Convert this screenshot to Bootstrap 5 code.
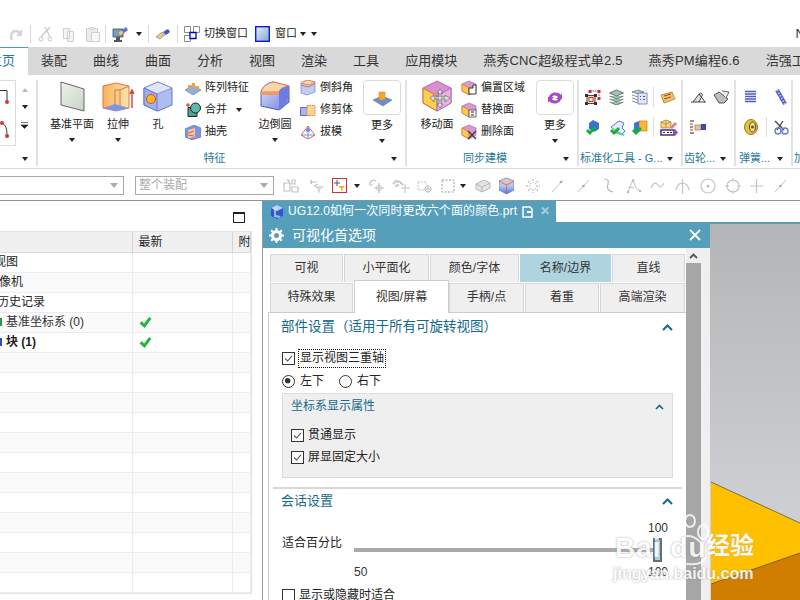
<!DOCTYPE html>
<html lang="zh">
<head>
  <meta charset="UTF-8" />
  <meta name="viewport" content="width=device-width, initial-scale=1" />
  <title>可视化首选项</title>
  <link href="https://cdn.jsdelivr.net/npm/bootstrap@5.3.3/dist/css/bootstrap.min.css" rel="stylesheet" />
  <style>
    html, body { height: 100%; }
    body {
      width: 800px; height: 600px; margin: 0; overflow: hidden; background: #fff; color: #222;
      font-family: "Liberation Sans", "Noto Sans CJK SC", sans-serif; font-size: 12px; line-height: 1.2;
    }
    svg { display: block; flex: none; }
    .svg-defs { position: absolute; width: 0; height: 0; }
    .m2 { margin-left: 2px; } .m3 { margin-left: 3px; } .m4 { margin-left: 4px; } .m5 { margin-left: 5px; }
    .m6 { margin-left: 6px; } .m7 { margin-left: 7px; } .m8 { margin-left: 8px; } .m9 { margin-left: 9px; }
    .m10 { margin-left: 10px; } .m11 { margin-left: 11px; } .m13 { margin-left: 13px; }

    /* quick access */
    .qat-bar { height: 47px; padding-top: 21px; font-size: 11px; }
    .qat-sep { width: 1px; height: 18px; background: #d8d8d8; }
    .caret-dn { width: 0; height: 0; flex: none; border: 3px solid transparent; border-top: 4px solid #222; border-bottom: 0; }
    .qat-n { margin-right: -5px; font-size: 13px; color: #333; }

    /* ribbon tabs */
    .rib-tabs { height: 28px; background: #d9d9d9; font-size: 13px; padding-left: 13px; margin-left: -37px; white-space: nowrap; }
    .rib-tab { padding: 0 13px; line-height: 28px; color: #333; }
    .rib-tab-on { background: #fff; color: #1f7a9c; border-top: 1px solid #4d9ab5; line-height: 26px; }
    .rib-wide { letter-spacing: .17px; }

    /* ribbon groups */
    .rib-body { height: 94px; border-bottom: 1px solid #d9d9d9; font-size: 11px; padding-top: 5px; white-space: nowrap; overflow: hidden; }
    .rib-grp { height: 86px; border-right: 2px solid #e2e2e2; display: flex; flex-direction: column; flex: none; }
    .grp-main { height: 72px; display: flex; }
    .grp-foot { height: 14px; display: flex; align-items: center; color: #1f7a9c; overflow: hidden; }
    .grp-foot span { flex: 1 1 auto; text-align: center; }
    .grp-foot .caret-dn { margin-right: 8px; }
    .g-first { width: 38px; } .g-feat { width: 369px; } .g-sync { width: 172px; }
    .g-std { width: 104px; } .g-gear { width: 53px; } .g-spring { width: 57px; } .g-last { width: 20px; border: 0; }
    .g-std .grp-foot span, .g-gear .grp-foot span, .g-spring .grp-foot span { text-align: left; padding-left: 1px; }
    .g-spring .grp-foot span { padding-left: 3px; }
    .g-last .grp-foot span { text-align: left; padding-left: 1px; }
    .big-btn { display: flex; flex-direction: column; align-items: center; flex: none; }
    .big-btn svg:first-child { height: 32px; }
    .big-lbl { margin-top: 5px; height: 14px; line-height: 14px; }
    .big-btn .caret-dn { margin-top: 7px; }
    .w52 { width: 52px; } .w40 { width: 40px; } .w38 { width: 38px; }
    .more-box { width: 38px; height: 35px; border: 1px solid #dcdcdc; border-radius: 4px; display: flex; align-items: center; justify-content: center; margin-bottom: 3px; }
    .more-lbl { margin-top: 0; }
    .sm-col { display: flex; flex-direction: column; margin-top: -3px; flex: none; }
    .sm-row { height: 22px; display: flex; align-items: center; gap: 4px; }
    .sm-row .caret-dn { margin-left: 5px; }
    .ico-grid { display: grid; grid-template-rows: 30px 30px; row-gap: 0; margin-top: 2px; align-items: center; }
    .ico-std { grid-template-columns: 24px 23px 21px 7px 20px; padding-left: 6px; }
    .ico-gear { grid-template-columns: 23px 20px; padding-left: 7px; }
    .ico-spring { grid-template-columns: 22px 8px 20px; padding-left: 8px; }
    .ico-sep { width: 1px; height: 20px; background: #ddd; }
    .first-frame { width: 17px; height: 66px; margin-left: -1px; border: 1px solid #dcdcdc; border-left: 0; position: relative; }
    .first-spin { margin-left: 5px; display: flex; flex-direction: column; align-items: center; gap: 13px; padding-top: 8px; }

    /* selection bar */
    .sel-bar { height: 31px; padding-top: 7px; font-size: 12px; color: #aaa; }
    .sel-combo { height: 19px; border: 1px solid #a8a8a8; display: flex; align-items: center; justify-content: space-between; padding: 0 5px 0 3px; }
    .caret-gr { width: 0; height: 0; border: 4px solid transparent; border-top: 5px solid #aaa; border-bottom: 0; }
    .c-one { width: 126px; margin-left: -2px; } .c-two { width: 139px; margin-left: 11px; }
    .sel-ico { height: 19px; display: flex; align-items: center; }
    .red-box { width: 15px; height: 15px; border: 1px solid #c8323c; }

    /* main area */
    .work-area { height: 400px; border-top: 1px solid #8f9294; }
    .nav-panel { width: 262px; flex: none; }
    .nav-top { height: 30px; display: flex; justify-content: flex-end; align-items: center; padding-right: 17px; }
    .max-ico { width: 12px; height: 11px; border: 1px solid #222; border-top-width: 2px; margin-top: 2px; }
    .tree-wrap { width: 252px; border: 1px solid #e4e4e4; border-left: 0; }
    .tree-tbl { table-layout: fixed; width: 250px; margin: 0; border-color: #ececec; }
    .tree-tbl th, .tree-tbl td { padding: 0; height: 20px; font-size: 12px; font-weight: 400; vertical-align: middle; border-bottom: 1px solid #ececec; overflow: hidden; white-space: nowrap; }
    .tree-tbl th { background: #f0f0f0; --bs-table-bg: #f0f0f0; border-bottom: 1px solid #dcdcdc; border-right: 1px solid #d4d4d4; }
    .tree-tbl td { border-right: 1px solid #ececec; }
    .tree-tbl tr.alt td { --bs-table-bg: #fafafa; background: #fafafa; }
    .th-pad { padding-left: 6px !important; }
    .tree-txt { display: flex; align-items: center; }
    .t-a { margin-left: -6px; } .t-b { margin-left: -13px; } .t-c { margin-left: -3px; }
    .t-d { color: #333; }
    .t-e { font-weight: 700; color: #222; }
    .tree-tip { width: 2px; height: 8px; margin-right: 4px; flex: none; }
    .tip-g { background: #2a9a3a; }
    .tip-b { background: #2a4ad0; }
    .chk-cell { padding-left: 6px !important; }

    .doc-col { width: 538px; flex: none; }
    .doc-tabrow { height: 21px; }
    .doc-tab { width: 294px; height: 21px; background: #559fba; color: #fff; font-size: 12px; letter-spacing: .1px; display: flex; align-items: center; padding-left: 7px; gap: 3px; white-space: nowrap; }
    .doc-x { color: #a9cfdc; font-weight: 700; margin-left: 3px; }
    .dlg-line { height: 2px; background: #559fba; }
    .dlg-wrap { height: 376px; }
    .dlg { width: 448px; flex: none; border-left: 1px solid #9a9a9a; margin-top: -2px; overflow: hidden; }
    .dlg-head { height: 26px; background: #559fba; color: #fff; font-size: 14px; display: flex; align-items: center; padding: 0 9px 0 6px; gap: 8px; }
    .dlg-x { margin-left: auto; }
    .dlg-main { height: 352px; }
    .dlg-left { width: 425px; padding: 6px 0 0 5px; flex: none; }
    .pref-tabs { flex-wrap: nowrap; border: 0; height: 28px; margin: 0 0 0 2px; }
    .pref-tabs-two { height: 29px; margin: 1px 0 0 2px; position: relative; z-index: 2; }
    .pref-tab { display: block; height: 100%; background: #efefef; border: 1px solid #d6d6d6; border-bottom: 0; margin-right: 1px; text-align: center; color: #333; padding-top: 6px; font-size: 12px; flex: none; }
    .pt-74 { width: 73px; } .pt-86 { width: 85px; } .pt-90 { width: 89px; } .pt-92 { width: 91px; } .pt-73 { width: 73px; }
    .pt-84 { width: 83px; } .pt-95 { width: 95px; margin: -3px 0 -1px; height: 33px; background: #fff; border-color: #ccc; padding-top: 9px; }
    .pt-76 { width: 75px; } .pt-75 { width: 74px; } .pt-85 { width: 85px; margin-right: 0; }
    .pt-hi { background: #aed4e0; border-color: #aed4e0; }
    .pref-box { width: 420px; height: 300px; border: 1px solid #ccc; border-bottom: 0; margin-left: 0; padding: 0 5px; }
    .sec-head { display: flex; align-items: center; justify-content: space-between; color: #15698c; padding: 0 9px 0 7px; }
    .sh-a { height: 29px; font-size: 13.5px; }
    .sh-b { height: 24px; font-size: 13px; }
    .opt-row { display: flex; align-items: center; color: #222; }
    .or-a { height: 19px; margin: 7px 0 0 8px; }
    .or-b { height: 20px; margin: 3px 0 0 8px; }
    .focus-txt { border: 1px dotted #111; padding: 0 1px; margin-left: -1px; height: 19px; line-height: 17px; }
    .pref-chk { width: 13px; height: 13px; margin: 0 4px 0 0 !important; flex: none; border: 1px solid #333; background-color: #fff; }
    .pref-chk[type=checkbox] { border-radius: 0; }
    .pref-chk[type=checkbox]:checked { background-color: #fff; border-color: #333; --bs-form-check-bg-image: url("data:image/svg+xml,%3csvg xmlns='http://www.w3.org/2000/svg' viewBox='0 0 13 13'%3e%3cpath d='M2.500 6.500l3 3 5-6' fill='none' stroke='%23555' stroke-width='1.300'/%3e%3c/svg%3e"); background-size: 100%; }
    .pref-chk:focus { box-shadow: none; border-color: #333; }
    .pref-rad[type=radio] { border-radius: 50%; }
    .pref-rad[type=radio]:checked { background-color: #fff; border-color: #333; --bs-form-check-bg-image: url("data:image/svg+xml,%3csvg xmlns='http://www.w3.org/2000/svg' viewBox='0 0 13 13'%3e%3ccircle cx='5.500' cy='5.500' r='3.200' fill='%23333'/%3e%3c/svg%3e"); background-size: 100%; }
    .rad-one { margin-left: 1px !important; }
    .rad-two { margin-left: 15px !important; margin-right: 5px !important; }
    .sub-box { width: 391px; height: 85px; margin: 2px 0 0 8px; background: #efefef; border: 1px solid #ddd; padding: 0 8px; }
    .sub-head { height: 25px; display: flex; align-items: center; justify-content: space-between; color: #15698c; }
    .sub-row { height: 22px; display: flex; align-items: center; color: #222; }
    .sr-first { margin-top: 5px; }
    .sec-rule { height: 2px; background: #d8d8d8; margin: 9px 0 0 -1px; width: 409px; }
    .sld-wrap { display: flex; margin: 8px 0 0 8px; }
    .sld-lbl { width: 72px; padding-top: 15px; flex: none; }
    .sld-col { flex: none; width: 314px; }
    .sld-top { height: 14px; text-align: right; line-height: 14px; color: #333; }
    .sld-rail { height: 24px; margin-top: 3px; display: flex; align-items: center; }
    .sld-track { width: 299px; height: 4px; background: #aaa; }
    .sld-thumb { width: 9px; height: 24px; background: #aed4e0; border: 2px solid #60707a; }
    .sld-ends { display: flex; justify-content: space-between; color: #333; line-height: 14px; margin-top: 3px; }
    .or-c { height: 16px; margin: 8px 0 0 8px; }
    .scroll-col { width: 15px; margin-left: -2px; background: #efefef; flex: none; }
    .scroll-up { height: 15px; display: flex; align-items: center; justify-content: center; }
    .scroll-thumb { height: 337px; background: #a6a6a6; }
    .scroll-gap { width: 10px; background: #efefef; flex: none; }
    .gfx { flex: 1 1 auto; overflow: hidden; }

    /* watermark */
    .bd-mark { position: absolute; left: 612px; top: 512px; width: 150px; height: 84px; color: #fff; pointer-events: none; }
    .bd-paw { position: absolute; left: 55px; top: 2px; }
    .bd-word { position: absolute; left: 3px; top: 19px; font-size: 28px; font-weight: 700; opacity: .85; font-family: "Liberation Sans", sans-serif; letter-spacing: 1px; white-space: nowrap; text-shadow: 0 0 2px #888; }
    .bd-cn { position: absolute; left: 94px; top: 20px; font-size: 24px; font-weight: 700; opacity: .9; white-space: nowrap; text-shadow: 0 0 1px #999; }
    .bd-url { position: absolute; left: 1px; top: 52px; font-size: 16px; font-weight: 700; opacity: .85; font-family: "Liberation Sans", sans-serif; white-space: nowrap; text-shadow: 0 0 2px #888; }
  </style>
</head>
<body>

<svg class="svg-defs" xmlns="http://www.w3.org/2000/svg">
  <defs>
    <linearGradient id="gOr" x1="0" x2="1"><stop offset="0" stop-color="#f6b25a"/><stop offset="1" stop-color="#f8e6a8"/></linearGradient>
    <linearGradient id="gBl" x1="0" x2="1" y1="0" y2="1"><stop offset="0" stop-color="#dfe6fb"/><stop offset="1" stop-color="#6f82e0"/></linearGradient>
    <linearGradient id="gGn" x1="0" x2="1" y1="0" y2="1"><stop offset="0" stop-color="#eef2ea"/><stop offset="1" stop-color="#c6d4c6"/></linearGradient>
    <linearGradient id="gWin" x1="0" x2="1" y1="0" y2="1"><stop offset="0" stop-color="#e8f0fa"/><stop offset="1" stop-color="#7fa4cc"/></linearGradient>
    <linearGradient id="gCube" x1="0" x2="0" y1="0" y2="1"><stop offset="0" stop-color="#f3c89a"/><stop offset=".5" stop-color="#b4c8ee"/><stop offset="1" stop-color="#4a78e8"/></linearGradient>
    <linearGradient id="gGfx" x1="0" x2="0" y1="0" y2="1"><stop offset="0" stop-color="#b4b5b7"/><stop offset="1" stop-color="#d6d7da"/></linearGradient>
  </defs>
  <symbol id="i-cube-more" viewBox="0 0 32 32"><path d="M16 1l14 7v15l-14 8-14-8V8z" fill="#d98fd0" stroke="#b06ab0"/><path d="M2 8l14 8v15L2 23z" fill="#fdcf4e" stroke="#d07a30"/><path d="M16 16l14-8v15l-14 8z" fill="#e9b4e4" stroke="#b06ab0"/></symbol>
  <symbol id="i-cube-sm" viewBox="0 0 16 16"><path d="M8 1l7 3v7l-7 4-7-4V4z" fill="#d99ad0" stroke="#a868a8" stroke-width=".7"/><path d="M1 4l7 4v7l-7-4z" fill="#fdc94e" stroke="#d07a30" stroke-width=".7"/></symbol>
  <symbol id="i-green" viewBox="0 0 14 14"><path d="M1 8l2-2 2.500 2.500L11 1.500l2 1.500-7 9.500z" fill="#10c030" stroke="#0a8a20" stroke-width=".5"/></symbol>
</svg>

<!-- quick access -->
<div class="qat-bar d-flex align-items-center">
  <svg class="m10" width="13" height="13" viewBox="0 0 13 13"><path d="M2 12C0 7 2 3 6 3c2 0 3 1 4 2" fill="none" stroke="#d4d4d4" stroke-width="2.400"/><path d="M12 1v7H6z" fill="#d4d4d4"/></svg>
  <div class="qat-sep m7"></div>
  <svg class="m7" width="14" height="16" viewBox="0 0 14 16"><path d="M12 1L3 11M7 1l5 10" stroke="#c8c8c8" stroke-width="1.200" fill="none"/><circle cx="3" cy="13" r="2" fill="none" stroke="#c8c8c8"/><circle cx="12" cy="13" r="2" fill="none" stroke="#c8c8c8"/></svg>
  <svg class="m10" width="13" height="15" viewBox="0 0 13 15"><path d="M1.500 1.500h6v10h-6z M5.500 4.500h6v10h-6z" fill="#f4f4f4" stroke="#cfcfcf"/></svg>
  <svg class="m10" width="15" height="16" viewBox="0 0 15 16"><path d="M1.500 2.500h11v13h-11z" fill="#ececec" stroke="#cfcfcf"/><path d="M4.500 1h5v3h-5z" fill="#ddd"/><path d="M6.500 6.500h8v9h-8z" fill="#f6f6f6" stroke="#cfcfcf"/></svg>
  <div class="qat-sep m5"></div>
  <svg class="m6" width="17" height="17" viewBox="0 0 17 17"><path d="M1 3h10v8H1z" fill="#6fa2c4" stroke="#333" stroke-width=".7"/><path d="M4 11h4v3H4zM2 14h8v2H2z" fill="#555"/><path d="M9 5l5-4 2 3-5 4z" fill="#5a6ed8"/><path d="M6 6l4-2 2 3-4 3z" fill="#e9c48f" stroke="#8a6a40" stroke-width=".5"/></svg>
  <div class="caret-dn m7"></div>
  <div class="qat-sep m6"></div>
  <svg class="m6" width="16" height="12" viewBox="0 0 16 12"><path d="M1 9l6-5 3 3-5 4z" fill="#e9c48f" stroke="#777" stroke-width=".6"/><path d="M8 4l5-3 2 3-4 3z" fill="#3f50c8"/></svg>
  <div class="qat-sep m6"></div>
  <svg class="m6" width="16" height="16" viewBox="0 0 16 16"><path d="M.5.500h6v6h-6zM9.500.500h6v6h-6zM.5 9.500h6v6h-6z" fill="#fff" stroke="#8a8a8a"/><path d="M6 6.500h6v6H6z" fill="#fff" stroke="#00c" stroke-width="1.300"/></svg>
  <span class="m4">切换窗口</span>
  <svg class="m7" width="15" height="16" viewBox="0 0 15 16"><rect x=".7" y=".7" width="13.600" height="14.600" fill="url(#gWin)" stroke="#0a1ed8" stroke-width="1.400"/></svg>
  <span class="m5">窗口</span>
  <div class="caret-dn m3"></div>
  <div class="caret-dn m5"></div>
  <span class="qat-n ms-auto">N</span>
</div>

<!-- ribbon tabs -->
<div class="rib-tabs d-flex">
  <div class="rib-tab rib-tab-on">主页</div>
  <div class="rib-tab">装配</div>
  <div class="rib-tab">曲线</div>
  <div class="rib-tab">曲面</div>
  <div class="rib-tab">分析</div>
  <div class="rib-tab">视图</div>
  <div class="rib-tab">渲染</div>
  <div class="rib-tab">工具</div>
  <div class="rib-tab">应用模块</div>
  <div class="rib-tab rib-wide">燕秀CNC超级程式单2.5</div>
  <div class="rib-tab rib-wide">燕秀PM编程6.6</div>
  <div class="rib-tab">浩强工具</div>
</div>

<!-- ribbon -->
<div class="rib-body d-flex">
  <div class="rib-grp g-first">
    <div class="grp-main">
      <div class="first-frame">
        <svg width="16" height="60" viewBox="0 0 16 60"><path d="M0 9.500h8v11" fill="none" stroke="#333"/><circle cx="8" cy="21" r="2" fill="#c83a3a"/><path d="M3 42c4 2 5 6 5 13" fill="none" stroke="#333"/><circle cx="3" cy="42" r="2" fill="#c83a3a"/><circle cx="8" cy="55" r="2" fill="#c83a3a"/></svg>
      </div>
      <div class="first-spin">
        <svg width="6" height="4" viewBox="0 0 6 4"><path d="M0 4l3-4 3 4z" fill="#bbb"/></svg>
        <div class="caret-dn"></div>
        <svg width="7" height="7" viewBox="0 0 7 7"><path d="M0 .5h7M0 3h7l-3.500 3.500z" fill="#222" stroke="#222" stroke-width=".6"/></svg>
      </div>
    </div>
    <div class="grp-foot"><span></span><div class="caret-dn"></div></div>
  </div>

  <div class="rib-grp g-feat">
    <div class="grp-main">
      <div class="big-btn w52 m8">
        <svg width="28" height="32" viewBox="0 0 28 32"><path d="M3 2l23 7v22L3 25z" fill="url(#gGn)" stroke="#666" stroke-width="1"/></svg>
        <div class="big-lbl">基准平面</div><div class="caret-dn"></div>
      </div>
      <div class="big-btn w40">
        <svg width="33" height="32" viewBox="0 0 33 32"><path d="M1 6l13-3 13 3v22l-13 3-13-3z" fill="url(#gOr)" stroke="#e0704a"/><path d="M13 10h5l9-4M13 10v20M18 10v20" fill="none" stroke="#e0704a"/><path d="M1 28l12-4 14 4-13 3z" fill="#7d96e4"/><path d="M30 28V12M28 14l2-4 2 4" stroke="#d63030" fill="none" stroke-width="1.300"/></svg>
        <div class="big-lbl">拉伸</div><div class="caret-dn"></div>
      </div>
      <div class="big-btn w40">
        <svg width="30" height="32" viewBox="0 0 30 32"><path d="M15 2l14 6v17l-14 6-14-6V8z" fill="#aebcf0" stroke="#6878c8"/><path d="M1 8l13 6 15-6-14-6z" fill="#dfe6fb" stroke="#8898d8"/><path d="M14 14v17L1 25V8z" fill="#a0aeee" stroke="#6878c8"/><circle cx="8" cy="19" r="4.500" fill="#f8b820" stroke="#e04830"/></svg>
        <div class="big-lbl">孔</div>
      </div>
      <div class="sm-col m7">
        <div class="sm-row"><svg width="16" height="14" viewBox="0 0 16 14"><path d="M0 9l8-5 8 5-8 5z" fill="#8eb0e0" stroke="#5a78b8" stroke-width=".6"/><path d="M3 4h3v4H3zM7 2h3v4H7zM11 5h3v4h-3z" fill="#f0a040"/></svg><span>阵列特征</span></div>
        <div class="sm-row"><svg width="16" height="16" viewBox="0 0 16 16"><path d="M3 5.500h9v9H3z" fill="#4aa89a" stroke="#222"/><circle cx="10.500" cy="6" r="5" fill="#5cb8a8" stroke="#222"/><path d="M1 3h4M3 1v4" stroke="#d02020"/></svg><span>合并</span><div class="caret-dn"></div></div>
        <div class="sm-row"><svg width="16" height="15" viewBox="0 0 16 15"><path d="M0 4l9-4 7 3v9l-9 3-7-3z" fill="#7f96d8" stroke="#5a70b8" stroke-width=".6"/><path d="M3 5l7-2v9l-7 1z" fill="#f6c6a0"/><path d="M3 8l6-2M3 10l6 1" stroke="#e06030"/></svg><span>抽壳</span></div>
      </div>
      <div class="big-btn w38 m7">
        <svg width="30" height="32" viewBox="0 0 30 32"><path d="M1 12c1-5 6-9 12-10l16 4v16l-10 8L1 26z" fill="url(#gBl)" stroke="#4a5ab8"/><path d="M1 12C3 6 8 3 14 2l15 4c-6 1-9 3-10 6z" fill="#f6d8a8" stroke="#e08060"/><path d="M19 12v18c6-2 10-8 10-24-6 1-9 3-10 6z" fill="#6c7ce0"/><path d="M1 12h18v3H1z" fill="#f39a60"/></svg>
        <div class="big-lbl">边倒圆</div><div class="caret-dn"></div>
      </div>
      <div class="sm-col m6">
        <div class="sm-row"><svg width="16" height="16" viewBox="0 0 16 16"><path d="M1 3l6-3 8 2v10L7 15 1 13z" fill="#bfcdf3" stroke="#7282d4" stroke-width=".7"/><path d="M1 3l6-3 8 2-6 3z" fill="#f7d8a0" stroke="#e07050" stroke-width=".7"/><path d="M1 5l7 2 7-3" fill="none" stroke="#e07050"/></svg><span>倒斜角</span></div>
        <div class="sm-row"><svg width="16" height="12" viewBox="0 0 16 12"><path d="M.5 3.500h8v8h-8z" fill="#aab6ee" stroke="#5a68c8"/><path d="M7 1.500h8v10H7z" fill="#f8d68a" stroke="#e07050" stroke-dasharray="1.500 1"/></svg><span>修剪体</span></div>
        <div class="sm-row"><svg width="16" height="15" viewBox="0 0 16 15"><path d="M8 1L1 10l7 4 7-4z" fill="#f3f5fc" stroke="#e07050"/><path d="M8 1v13M1 10h14" stroke="#5a78c8" stroke-width=".7"/><circle cx="8" cy="5" r="2" fill="#6f8ad8"/></svg><span>拔模</span></div>
      </div>
      <div class="big-btn w38 m10">
        <div class="more-box"><svg width="19" height="18" viewBox="0 0 19 18"><path d="M0 11l9-4 10 4-9 6z" fill="#6792c8" stroke="#4a70a8" stroke-width=".5"/><path d="M6 3h6v8H6z" fill="#f6a72c" stroke="#d47820" stroke-width=".5"/></svg></div>
        <div class="big-lbl more-lbl">更多</div><div class="caret-dn"></div>
      </div>
    </div>
    <div class="grp-foot"><span>特征</span><div class="caret-dn"></div></div>
  </div>

  <div class="rib-grp g-sync">
    <div class="grp-main">
      <div class="big-btn w38 m11">
        <svg width="32" height="32" viewBox="0 0 32 32"><use href="#i-cube-more"/><path d="M19 9l3 4h-2v4h4v-2l5 3-5 4v-3h-4v5h2l-3 4-3-4h2v-5h-5v3l-4-4 4-3v2h5v-4h-2z" fill="#ddd" stroke="#666" stroke-width=".7"/></svg>
        <div class="big-lbl">移动面</div>
      </div>
      <div class="sm-col m5">
        <div class="sm-row"><svg width="16" height="16" viewBox="0 0 16 16"><use href="#i-cube-sm"/><path d="M8 8h4V5h3v9H8z" fill="#fff" stroke="#222" stroke-width=".9"/></svg><span>偏置区域</span></div>
        <div class="sm-row"><svg width="16" height="16" viewBox="0 0 16 16"><use href="#i-cube-sm"/><path d="M8 8h7v7H8z" fill="#fff" stroke="#444" stroke-width=".8"/><path d="M10 10h3M10 13h3" stroke="#222"/></svg><span>替换面</span></div>
        <div class="sm-row"><svg width="16" height="16" viewBox="0 0 16 16"><use href="#i-cube-sm"/><path d="M7 7l8 8M15 7l-8 8" stroke="#444" stroke-width="1.500"/></svg><span>删除面</span></div>
      </div>
      <div class="big-btn w38 m11">
        <div class="more-box"><svg width="16" height="14" viewBox="0 0 16 14"><path d="M2 6c1-5 9-6 12-2l1-2v6H9l2-2C9 4 6 4 5 6zM14 8c-1 5-9 6-12 2l-1 2V6h6L5 8c2 2 5 2 6 0z" fill="#a848c8"/></svg></div>
        <div class="big-lbl more-lbl">更多</div><div class="caret-dn"></div>
      </div>
    </div>
    <div class="grp-foot"><span>同步建模</span><div class="caret-dn"></div></div>
  </div>

  <div class="rib-grp g-std">
    <div class="grp-main">
      <div class="ico-grid ico-std">
        <svg width="16" height="16" viewBox="0 0 16 16"><path d="M5 2h9v8" fill="none" stroke="#c83040" stroke-dasharray="1.500 1"/><path d="M3.500 1h3v3h-3zM12.500 1h3v3h-3zM12.500 8h3v3h-3z" fill="#c83040"/><path d="M2 6.500h8v8H2z" fill="#fbe6c4" stroke="#444"/><path d="M0 5h3v3H0zM9 5h3v3H9zM0 13h3v3H0zM9 13h3v3H9z" fill="#333"/><rect x="4" y="8.500" width="4" height="4" fill="#fff" stroke="#e02020"/></svg>
        <svg width="15" height="16" viewBox="0 0 15 16"><path d="M7.500 1l7 3-7 3-7-3zM.5 7l7 3 7-3M.5 10l7 3 7-3M.5 13l7 3 7-3" fill="#9ac8b0" stroke="#555" stroke-width=".8"/></svg>
        <svg width="16" height="16" viewBox="0 0 16 16"><path d="M6 1l6 2-6 2-6-2zM0 6l6 2M0 9l6 2M0 12l6 2" fill="#b0d0c0" stroke="#777" stroke-width=".8"/><path d="M6 4h9v11H6z" fill="#e4e8fb" stroke="#5a70d0" stroke-width=".8"/><path d="M8 7h1v1H8zM11 7h2v1h-2zM8 10h1v1H8zM11 10h2v1h-2z" fill="#3a50c0"/></svg>
        <div class="ico-sep"></div>
        <svg width="16" height="13" viewBox="0 0 16 13"><path d="M1 4l11-3 3 7-11 4z" fill="#f8c068" stroke="#b07a28" stroke-width=".8"/><path d="M4 5l7-2M4 8l7-2" stroke="#7a5a28"/></svg>
        <svg width="15" height="17" viewBox="0 0 15 17"><path d="M8 1l6 3v6l-5 3-5-3V4z" fill="#3c72d8"/><path d="M1 12l2-2 2 2 4-5 2 2-6 7z" fill="#10b030"/></svg>
        <svg width="17" height="17" viewBox="0 0 17 17"><path d="M2 8l8-6 5 2-2 5 3 3-3 3-6-3z" fill="#e4eefc" stroke="#5a78d8"/><path d="M5 13l10 3" stroke="#70c8a0" stroke-width="2"/><path d="M1 12l2-2 2 2 4-4 2 2-6 6z" fill="#10b030"/></svg>
        <svg width="16" height="17" viewBox="0 0 16 17"><path d="M7 2h8v10H7z" fill="#f8b830" stroke="#c87820" stroke-width=".7"/><path d="M2 4l5-2v10H2z" fill="#3c72d8"/><path d="M0 12l2-2 2 2 4-4 2 2-6 6z" fill="#10b030"/></svg>
        <div class="ico-sep"></div>
        <svg width="18" height="17" viewBox="0 0 18 17"><path d="M1 3l5-2 5 2v6H1z" fill="#f8d080" stroke="#a87828" stroke-width=".7"/><path d="M6 1v8M1 3l5 2 5-2" stroke="#a87828" fill="none" stroke-width=".6"/><path d="M10 8l5-5 2 2-5 5z" fill="#e08080"/><path d="M1 11h13v5H1z" fill="#fff" stroke="#4a2a90" stroke-width="1.500"/><path d="M3 13h2v1H3zM7 13h2v1H7zM10 13h2v1h-2z" fill="#333"/><path d="M15 10l3 3.500-3 3.500z" fill="#b040b0"/></svg>
      </div>
    </div>
    <div class="grp-foot"><span>标准化工具 - G...</span><div class="caret-dn"></div></div>
  </div>

  <div class="rib-grp g-gear">
    <div class="grp-main">
      <div class="ico-grid ico-gear">
        <svg width="17" height="12" viewBox="0 0 17 12"><path d="M1 11h15M3 11l6-8c2-2 4 0 3 2l-3 6M9 3l6 8" fill="#ddd" stroke="#444" stroke-width="1"/></svg>
        <svg width="17" height="14" viewBox="0 0 17 14"><path d="M1 5l5-3 9 7-4 4H6z" fill="#bdbdbd" stroke="#333" stroke-width=".8"/><path d="M9 1l7 1-3 6" fill="#eee" stroke="#444" stroke-width=".8"/></svg>
        <svg width="16" height="14" viewBox="0 0 16 14"><path d="M0 1h4M0 7h3M0 13h4" stroke="#222"/><path d="M0 4h3M0 10h3" stroke="#c83030"/><path d="M5 5h6v5H5z" fill="#e9c48f" stroke="#8a6a40" stroke-width=".6"/><rect x="11" y="4" width="5" height="6" fill="#3a4ab0"/></svg>
      </div>
    </div>
    <div class="grp-foot"><span>齿轮...</span><div class="caret-dn"></div></div>
  </div>

  <div class="rib-grp g-spring">
    <div class="grp-main">
      <div class="ico-grid ico-spring">
        <svg width="13" height="14" viewBox="0 0 13 14"><path d="M1 1.500h11M1 4h11M1 6.500h11M1 9h11M1 11.500h11" stroke="#4a5ac8" stroke-width="1.700"/></svg>
        <span></span>
        <svg width="14" height="17" viewBox="0 0 14 17"><path d="M3 1l8 14" stroke="#4a5ac8" stroke-width="4"/><path d="M3 1l8 14" stroke="#b8c4f0" stroke-width="2" stroke-dasharray="1.500 1.500"/></svg>
        <svg width="14" height="16" viewBox="0 0 14 16"><ellipse cx="7" cy="8" rx="6.500" ry="7.500" fill="#e8c040" stroke="#9a7a10"/><ellipse cx="8.500" cy="8" rx="3" ry="5" fill="#f6e080" stroke="#444"/><circle cx="8.500" cy="8" r="1.500" fill="#555"/></svg>
        <div class="ico-sep"></div>
        <svg width="15" height="15" viewBox="0 0 15 15"><path d="M1 1l9 9M9 1L3 10" stroke="#444" stroke-width="1.300"/><circle cx="4" cy="11" r="3" fill="none" stroke="#6a7ad8" stroke-width="1.400"/><circle cx="11" cy="11" r="3" fill="none" stroke="#6a7ad8" stroke-width="1.400"/></svg>
      </div>
    </div>
    <div class="grp-foot"><span>弹簧...</span><div class="caret-dn"></div></div>
  </div>
  <div class="rib-grp g-last"><div class="grp-main"></div><div class="grp-foot"><span>加工</span></div></div>
</div>

<!-- selection bar -->
<div class="sel-bar d-flex align-items-start">
  <div class="sel-combo c-one"><span></span><span class="caret-gr"></span></div>
  <div class="sel-combo c-two"><span>整个装配</span><span class="caret-gr"></span></div>
  <div class="sel-ico m9"><svg width="16" height="16" viewBox="0 0 16 16"><path d="M1 5h6v8H1zM9 2h3v4H9zM9 9h6v5H9zM3 2h3v3" fill="none" stroke="#c4c4c4" stroke-width="1.200"/></svg></div>
  <div class="sel-ico m11"><svg width="14" height="15" viewBox="0 0 14 15"><path d="M1 4h6M2 2L0 4l2 2M4 8l4-2" fill="none" stroke="#c4c4c4" stroke-width="1.200"/><path d="M4 8h10l-4 4v3l-2-1v-2z" fill="#d8d8d8"/></svg></div>
  <div class="sel-ico m8"><div class="red-box d-flex align-items-center justify-content-center"><svg width="11" height="11" viewBox="0 0 11 11"><path d="M3 0v6M0 3h6" stroke="#555"/><path d="M4 6h7L8.500 8.500V11L7 10V8.500z" fill="#f0b020"/></svg></div></div>
  <div class="sel-ico m7"><div class="caret-dn"></div></div>
  <div class="sel-ico m9"><svg width="16" height="16" viewBox="0 0 16 16"><path d="M1 6c0-3 3-5 6-3M1 4v3h3" fill="none" stroke="#c4c4c4" stroke-width="1.200"/><path d="M10 5v10M5 10h10" stroke="#c4c4c4" stroke-width="1.200"/><circle cx="10" cy="10" r="2.500" fill="none" stroke="#c4c4c4"/></svg></div>
  <div class="sel-ico m7"><svg width="20" height="16" viewBox="0 0 20 16"><path d="M1 6l3-3 4 1 3 3M3 8l4-1" fill="none" stroke="#c8c8c8" stroke-width="2"/><path d="M13 6v9M9 10h9" stroke="#c4c4c4"/></svg></div>
  <div class="sel-ico m5"><svg width="15" height="16" viewBox="0 0 15 16"><path d="M1 4h8v8H1z" fill="none" stroke="#c8c8c8" stroke-dasharray="2 1"/><circle cx="11" cy="11" r="3" fill="none" stroke="#c4c4c4"/><path d="M11 7v8M7 11h8" stroke="#c4c4c4"/></svg></div>
  <div class="sel-ico m9"><svg width="14" height="14" viewBox="0 0 14 14"><path d="M1 1h12v12H1z" fill="none" stroke="#999" stroke-dasharray="2 1.500"/></svg></div>
  <div class="sel-ico m5"><div class="caret-dn"></div></div>
  <div class="sel-ico m9"><svg width="16" height="14" viewBox="0 0 16 14"><path d="M1 5l8-4 6 3v5l-8 4-6-3z" fill="#e4e4e4" stroke="#b8b8b8"/><path d="M1 5l6 3 8-4M7 8v5" fill="none" stroke="#b8b8b8"/></svg></div>
  <div class="sel-ico m8"><svg width="15" height="17" viewBox="0 0 15 17"><path d="M7.500 1L15 4v9l-7.500 4L0 13V4z" fill="url(#gCube)" stroke="#5a78d8" stroke-width=".7"/><path d="M0 4l7.500 4L15 4M7.500 8v9" fill="none" stroke="#e05050" stroke-width=".7"/></svg></div>
  <div class="sel-ico m11"><svg width="16" height="16" viewBox="0 0 16 16"><path d="M8 1v4M8 11v4M1 8h4M11 8h4M3 3l3 3M13 3l-3 3M3 13l3-3M13 13l-3-3" stroke="#c4c4c4" stroke-width="1.400" stroke-dasharray="2 1"/></svg></div>
  <div class="sel-ico m10"><svg width="13" height="14" viewBox="0 0 13 14"><path d="M1 13L12 1" stroke="#c4c4c4"/><circle cx="10" cy="3" r="1.300" fill="#aaa"/></svg></div>
  <div class="sel-ico m13"><svg width="13" height="14" viewBox="0 0 13 14"><path d="M1 13L12 1" stroke="#c4c4c4"/><circle cx="6.500" cy="7" r="1.300" fill="#aaa"/></svg></div>
  <div class="sel-ico m11"><svg width="15" height="16" viewBox="0 0 15 16"><path d="M3 1c4 0 5 2 4 5-1 3-1 7 5 8" fill="none" stroke="#b8b8b8" stroke-width="1.200"/></svg></div>
  <div class="sel-ico m10"><svg width="16" height="16" viewBox="0 0 16 16"><path d="M2 14L7 2l3 8 4 3M2 9l6 1" fill="none" stroke="#c4c4c4"/><circle cx="7" cy="2.500" r="1.300" fill="#bbb"/><circle cx="2" cy="14" r="1.300" fill="#bbb"/><circle cx="14" cy="13" r="1.300" fill="#bbb"/></svg></div>
  <div class="sel-ico m8"><svg width="15" height="12" viewBox="0 0 15 12"><path d="M1 8c3-6 5-6 7-3s3 3 6-2" fill="none" stroke="#c4c4c4" stroke-width="1.200"/></svg></div>
  <div class="sel-ico m10"><svg width="15" height="16" viewBox="0 0 15 16"><path d="M1 12c1-5 3-7 6.500-7S13 7 14 12M7.500 1v15" fill="none" stroke="#c4c4c4" stroke-width="1.200"/></svg></div>
  <div class="sel-ico m10"><svg width="16" height="16" viewBox="0 0 16 16"><circle cx="8" cy="8" r="7" fill="none" stroke="#c4c4c4" stroke-width="1.200"/><circle cx="8" cy="8" r="1.500" fill="#bbb"/></svg></div>
  <div class="sel-ico m9"><svg width="16" height="16" viewBox="0 0 16 16"><circle cx="8" cy="8" r="6" fill="none" stroke="#c4c4c4" stroke-width="1.200"/><path d="M8 0v4M8 12v4M0 8h4M12 8h4" stroke="#c4c4c4"/></svg></div>
  <div class="sel-ico m9"><svg width="13" height="14" viewBox="0 0 13 14"><path d="M6.500 0v14M0 7h13" stroke="#c4c4c4" stroke-width="1.200"/></svg></div>
  <div class="sel-ico m11"><svg width="13" height="14" viewBox="0 0 13 14"><path d="M1 13L12 1" stroke="#c4c4c4"/><circle cx="6.500" cy="7" r="1.300" fill="#aaa"/></svg></div>
</div>

<!-- main area -->
<div class="work-area d-flex">
  <div class="nav-panel">
    <div class="nav-top"><div class="max-ico"></div></div>
    <div class="tree-wrap">
      <table class="table tree-tbl">
        <colgroup><col width="132"><col width="100"><col width="18"></colgroup>
        <thead><tr><th></th><th class="th-pad">最新</th><th class="th-pad">附</th></tr></thead>
        <tbody>
          <tr><td><div class="tree-txt t-a">视图</div></td><td></td><td></td></tr>
          <tr class="alt"><td><div class="tree-txt t-b">摄像机</div></td><td></td><td></td></tr>
          <tr><td><div class="tree-txt t-c">历史记录</div></td><td></td><td></td></tr>
          <tr class="alt"><td><div class="tree-txt t-d"><div class="tree-tip tip-g"></div>基准坐标系 (0)</div></td><td class="chk-cell"><svg width="13" height="13"><use href="#i-green"/></svg></td><td></td></tr>
          <tr><td><div class="tree-txt t-e"><div class="tree-tip tip-b"></div>块 (1)</div></td><td class="chk-cell"><svg width="13" height="13"><use href="#i-green"/></svg></td><td></td></tr>
          <tr class="alt"><td></td><td></td><td></td></tr>
          <tr><td></td><td></td><td></td></tr>
          <tr class="alt"><td></td><td></td><td></td></tr>
          <tr><td></td><td></td><td></td></tr>
          <tr class="alt"><td></td><td></td><td></td></tr>
          <tr><td></td><td></td><td></td></tr>
          <tr class="alt"><td></td><td></td><td></td></tr>
          <tr><td></td><td></td><td></td></tr>
          <tr class="alt"><td></td><td></td><td></td></tr>
          <tr><td></td><td></td><td></td></tr>
          <tr class="alt"><td></td><td></td><td></td></tr>
          <tr><td></td><td></td><td></td></tr>
        </tbody>
      </table>
    </div>
  </div>

  <div class="doc-col">
    <div class="doc-tabrow d-flex">
      <div class="doc-tab">
        <svg width="16" height="16" viewBox="0 0 16 16"><path d="M8 1l6 3v8l-6 3-6-3V4z" fill="#2a5ad8"/><path d="M8 1l6 3-6 3-6-3z" fill="#bcd0f8"/><path d="M5 5l2-2v8l5 1-2 2-5-1z" fill="#fff" opacity=".55"/></svg>
        <span>UG12.0如何一次同时更改六个面的颜色.prt</span>
        <svg class="m2" width="12" height="12" viewBox="0 0 12 12"><path d="M1 1h7l2 2v8H1z" fill="none" stroke="#fff" stroke-width="1.500"/><path d="M5 6h4" stroke="#fff" stroke-width="2"/></svg>
        <span class="doc-x">✕</span>
      </div>
    </div>
    <div class="dlg-line"></div>
    <div class="dlg-wrap d-flex">
      <div class="dlg">
        <div class="dlg-head">
          <svg width="15" height="15" viewBox="0 0 15 15"><circle cx="7.500" cy="7.500" r="4" fill="none" stroke="#fff" stroke-width="3"/><path d="M7.500 0v3M7.500 12v3M0 7.500h3M12 7.500h3M2.200 2.200l2 2M10.800 10.800l2 2M2.200 12.800l2-2M10.800 4.200l2-2" stroke="#fff" stroke-width="2"/></svg>
          <span>可视化首选项</span>
          <svg class="dlg-x" width="12" height="12" viewBox="0 0 12 12"><path d="M1 1l10 10M11 1L1 11" stroke="#fff" stroke-width="1.800"/></svg>
        </div>
        <div class="dlg-main d-flex">
          <div class="dlg-left">
            <ul class="nav nav-tabs pref-tabs">
              <li class="pref-tab pt-74">可视</li>
              <li class="pref-tab pt-86">小平面化</li>
              <li class="pref-tab pt-90">颜色/字体</li>
              <li class="pref-tab pt-92 pt-hi">名称/边界</li>
              <li class="pref-tab pt-73">直线</li>
            </ul>
            <ul class="nav nav-tabs pref-tabs pref-tabs-two">
              <li class="pref-tab pt-84">特殊效果</li>
              <li class="pref-tab pt-95">视图/屏幕</li>
              <li class="pref-tab pt-76">手柄/点</li>
              <li class="pref-tab pt-75">着重</li>
              <li class="pref-tab pt-85">高端渲染</li>
            </ul>
            <div class="pref-box">
              <div class="sec-head sh-a"><span>部件设置（适用于所有可旋转视图）</span>
                <svg width="11" height="7" viewBox="0 0 11 7"><path d="M1 6l4.500-4.500L10 6" fill="none" stroke="#15698c" stroke-width="2"/></svg></div>
              <div class="opt-row or-a"><input class="form-check-input pref-chk" type="checkbox" checked><span class="focus-txt">显示视图三重轴</span></div>
              <div class="opt-row or-b">
                <input class="form-check-input pref-chk pref-rad" type="radio" name="pos" checked><span class="rad-one">左下</span>
                <input class="form-check-input pref-chk pref-rad rad-two" type="radio" name="pos"><span>右下</span>
              </div>
              <div class="sub-box">
                <div class="sub-head"><span>坐标系显示属性</span>
                  <svg width="9" height="6" viewBox="0 0 9 6"><path d="M1 5l3.500-3.500L8 5" fill="none" stroke="#15698c" stroke-width="1.700"/></svg></div>
                <div class="sub-row sr-first"><input class="form-check-input pref-chk" type="checkbox" checked><span>贯通显示</span></div>
                <div class="sub-row"><input class="form-check-input pref-chk" type="checkbox" checked><span>屏显固定大小</span></div>
              </div>
              <div class="sec-rule"></div>
              <div class="sec-head sh-b"><span>会话设置</span>
                <svg width="11" height="7" viewBox="0 0 11 7"><path d="M1 6l4.500-4.500L10 6" fill="none" stroke="#15698c" stroke-width="2"/></svg></div>
              <div class="sld-wrap">
                <div class="sld-lbl">适合百分比</div>
                <div class="sld-col">
                  <div class="sld-top">100</div>
                  <div class="sld-rail"><div class="sld-track"></div><div class="sld-thumb"></div></div>
                  <div class="sld-ends"><span>50</span><span>100</span></div>
                </div>
              </div>
              <div class="opt-row or-c"><input class="form-check-input pref-chk" type="checkbox"><span>显示或隐藏时适合</span></div>
            </div>
          </div>
          <div class="scroll-col">
            <div class="scroll-up"><svg width="9" height="6" viewBox="0 0 9 6"><path d="M1 5l3.500-3.500L8 5" fill="none" stroke="#555" stroke-width="1.800"/></svg></div>
            <div class="scroll-thumb"></div>
          </div>
          <div class="scroll-gap"></div>
        </div>
      </div>
      <div class="gfx">
        <svg width="90" height="376" viewBox="0 0 90 376">
          <rect width="90" height="376" fill="url(#gGfx)"/>
          <path d="M1 258L90 299V376H1z" fill="#ffc000"/>
          <path d="M1 360L90 329V376H1z" fill="#d07e00"/>
          <path d="M1 258L90 299M1 360L90 329" stroke="#4a4a4a" stroke-width=".7" fill="none"/>
        </svg>
      </div>
    </div>
  </div>
</div>

<!-- baidu watermark -->
<div class="bd-mark">
  <svg class="bd-paw" width="46" height="60" viewBox="0 0 46 60"><g fill="none" stroke="#fff" stroke-width="2" opacity=".8"><ellipse cx="9" cy="12" rx="5" ry="8"/><ellipse cx="23" cy="7" rx="5" ry="6"/><ellipse cx="36" cy="18" rx="5" ry="7"/><path d="M4 38c0-12 10-16 17-16s18 8 18 18c0 8-7 11-18 10C10 49 4 46 4 38z"/></g></svg>
  <div class="bd-word">Bai&nbsp;du</div>
  <div class="bd-cn">经验</div>
  <div class="bd-url">jingyan.baidu.com</div>
</div>

<script src="https://cdn.jsdelivr.net/npm/bootstrap@5.3.3/dist/js/bootstrap.bundle.min.js"></script>
</body>
</html>
